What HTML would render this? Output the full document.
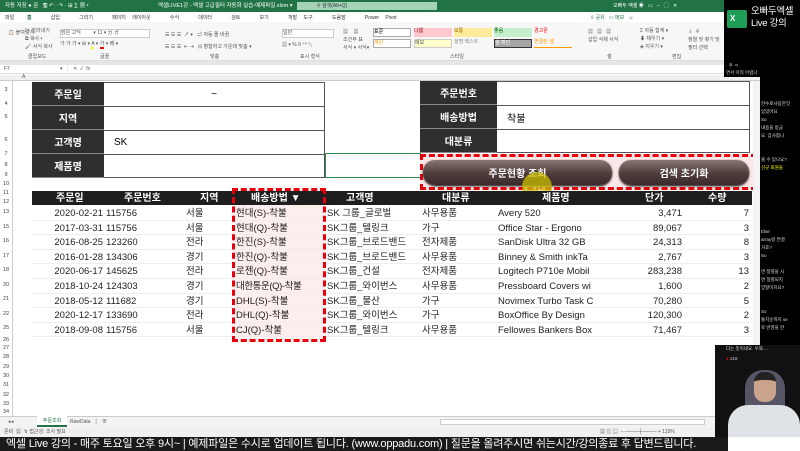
<!DOCTYPE html>
<html><head><meta charset="utf-8"><style>
*{margin:0;padding:0;box-sizing:border-box}
body{width:800px;height:451px;overflow:hidden;background:#fff;position:relative;font-family:"Liberation Sans","Noto Sans CJK KR",sans-serif;}
.a{position:absolute;white-space:nowrap}
.t{font-size:5px;color:#555;line-height:7px}
.lbl{position:absolute;background:#2f2f2f;color:#fff;font-size:10px;font-weight:bold;display:flex;align-items:center;justify-content:center;border-bottom:1px solid #888}
.val{position:absolute;border:1px solid #555;border-left:none;font-size:10px;display:flex;align-items:center;padding-left:10px}
.row{position:absolute;left:32px;width:720px;height:14.6px;font-size:9.5px;line-height:13px;color:#222;border-bottom:1px solid #eee}
.row span{position:absolute;top:1px;line-height:13px}
.rn{position:absolute;left:0;width:12px;font-size:5.5px;color:#444;text-align:center;line-height:7px}
.btn{position:absolute;height:25px;border-radius:12px;background:linear-gradient(#8a7674,#4e3c3b 55%,#3a2c2b);color:#fff;font-size:10px;font-weight:bold;display:flex;align-items:center;justify-content:center;box-shadow:0 1px 2px #000}
</style></head><body>
<div class="a" style="left:0;top:0;width:724px;height:12px;background:#217346"></div>
<div class="a" style="left:5px;top:2px;font-size:5.5px;line-height:8px;color:#fff">자동 저장 ● 끔 &nbsp; 🖫 ↶ · ↷ · ⊞ ∑ ▦ ▾</div>
<div class="a" style="left:158px;top:2px;font-size:5.5px;line-height:8px;color:#fff">엑셀LIVE1강 - 엑셀 고급필터 자동화 실습-예제파일.xlsm ▾</div>
<div class="a" style="left:297px;top:2px;width:140px;height:8px;background:#a4d3b8;font-size:5px;line-height:8px;color:#333;padding-left:20px">⚲ 검색(Alt+Q)</div>
<div class="a" style="left:613px;top:2px;font-size:5px;line-height:8px;color:#fff">오빠두 엑셀 ◉ &nbsp; ▭ &nbsp; – &nbsp; ▢ &nbsp; ✕</div>
<div class="a" style="left:5px;top:15px;font-size:5px;line-height:7px;color:#333;word-spacing:5px">파일 &nbsp;<b style="color:#217346">홈</b> &nbsp; 삽입 &nbsp; 그리기 &nbsp; 페이지 레이아웃 &nbsp; 수식 &nbsp; 데이터 &nbsp; 검토 &nbsp; 보기 &nbsp; 개발 도구 &nbsp; 도움말 &nbsp; Power Pivot</div>
<div class="a" style="left:590px;top:15px;font-size:5px;line-height:7px;color:#217346">⇪ 공유 &nbsp; ▭ 메모 &nbsp; ☺</div>
<div class="a" style="left:0;top:22px;width:724px;height:39px;background:#f7f7f7;border-bottom:1px solid #ddd"></div>
<div class="a t" style="left:8px;top:30px">📋 붙여넣기</div>
<div class="a t" style="left:25px;top:27px;line-height:8px">✂ 잘라내기<br>⧉ 복사 ▾<br>🖌 서식 복사</div>
<div class="a t" style="left:60px;top:29px;width:90px;border:1px solid #ccc;background:#fff">맑은 고딕 &nbsp;&nbsp;&nbsp;&nbsp;&nbsp;&nbsp;&nbsp; ▾ 11 ▾ ガ ガ</div>
<div class="a t" style="left:60px;top:41px">가 가 가 ▾ ⊞ ▾ <span style="border-bottom:2px solid #ff0">A</span> ▾ <span style="border-bottom:2px solid red">가</span> ▾ 배 ▾</div>
<div class="a t" style="left:165px;top:29px;line-height:12px">☰ ☰ ☰ &nbsp;↗ ▾ &nbsp; ⇌ 자동 줄 바꿈<br>☰ ☰ ☰ &nbsp;⇤ ⇥ &nbsp; ⊟ 병합하고 가운데 맞춤 ▾</div>
<div class="a t" style="left:282px;top:29px;width:52px;border:1px solid #ccc;background:#fff">일반</div>
<div class="a t" style="left:282px;top:42px">▦ ▾ % 9 ⁺⁰ ⁰₀</div>
<div class="a t" style="left:343px;top:28px;line-height:8px">▦ &nbsp;&nbsp; ▦<br>조건부 표<br>서식 ▾ 서식▾</div>
<div class="a t" style="left:373px;top:28px;width:38px;height:9px;background:#fff;border:1px solid #aaa;color:#000">표준</div>
<div class="a t" style="left:373px;top:39px;width:38px;height:9px;background:#fff;border:1px solid #aaa;color:#f90">계산</div>
<div class="a t" style="left:414px;top:28px;width:38px;height:9px;background:#ffc7ce;color:#9c0006">나쁨</div>
<div class="a t" style="left:414px;top:39px;width:38px;height:9px;background:#ffffcc;border:1px solid #ccc">메모</div>
<div class="a t" style="left:454px;top:28px;width:38px;height:9px;background:#ffeb9c;color:#9c6500">보통</div>
<div class="a t" style="left:454px;top:39px;width:38px;height:9px;color:#888">설명 텍스트</div>
<div class="a t" style="left:494px;top:28px;width:38px;height:9px;background:#c6efce;color:#006100">좋음</div>
<div class="a t" style="left:494px;top:39px;width:38px;height:9px;background:#a5a5a5;color:#fff;border:1px solid #333">셀 확인</div>
<div class="a t" style="left:534px;top:28px;width:38px;height:9px;color:#f00">경고문</div>
<div class="a t" style="left:534px;top:39px;width:38px;height:9px;color:#f90;border-bottom:1px solid #f90">연결된 셀</div>
<div class="a t" style="left:588px;top:28px;line-height:8px">▦ &nbsp; ▦ &nbsp; ▦<br>삽입 삭제 서식</div>
<div class="a t" style="left:640px;top:27px;line-height:8px">Σ 자동 합계 ▾<br>⬇ 채우기 ▾<br>◈ 지우기 ▾</div>
<div class="a t" style="left:688px;top:28px;line-height:8px">⏚ &nbsp;⚲<br>정렬 및 찾기 및<br>필터 선택</div>
<div class="a t" style="left:28px;top:54px">클립보드</div><div class="a t" style="left:100px;top:54px">글꼴</div><div class="a t" style="left:210px;top:54px">맞춤</div><div class="a t" style="left:300px;top:54px">표시 형식</div><div class="a t" style="left:450px;top:54px">스타일</div><div class="a t" style="left:607px;top:54px">셀</div><div class="a t" style="left:672px;top:54px">편집</div>
<div class="a" style="left:0;top:61px;width:724px;height:4px;background:#e6e6e6"></div>
<div class="a" style="left:0;top:65px;width:760px;height:9px;background:#fff;border-bottom:1px solid #ddd"></div>
<div class="a t" style="left:4px;top:66px">F7</div><div class="a t" style="left:60px;top:66px">▾ &nbsp;⋮ &nbsp;✕ &nbsp;✓ &nbsp;fx</div>
<div class="a" style="left:0;top:75px;width:760px;height:6px;background:#f0f0f0;border-bottom:1px solid #ccc"></div>
<div class="a t" style="left:22px;top:74px">A</div>
<div class="a" style="left:724px;top:0;width:76px;height:77px;background:#000"></div>
<div class="a" style="left:760px;top:77px;width:40px;height:300px;background:#000"></div>
<div class="a" style="left:715px;top:345px;width:85px;height:92px;background:#111"></div>
<div class="a" style="left:727px;top:10px;width:20px;height:18px;background:#1f9e58;border-radius:2px;color:#fff;font-size:8px;line-height:10px;font-weight:bold;padding:4px 0 0 3px">X</div>
<div class="a" style="left:751px;top:6px;font-size:9.5px;color:#fff;line-height:12px;letter-spacing:-0.3px">오빠두엑셀<br>Live 강의</div>
<div class="a" style="left:726px;top:62px;font-size:4.5px;color:#ccc;line-height:7px">· 추 ㅋ<br>면서 아직 어렵나</div>
<div class="a" style="left:761px;top:100px;font-size:4.5px;color:#ddd;line-height:8px">한수로사용한것<br>있었어요<br>So<br>내용을 방금<br>요. 갑사합니<br><br><br>볼 수 있나요?<br><span style="color:#ff0">신규 회원을</span><br><br><br><br><br><br><br><br>Else<br>array랑 연결<br>거죠?<br>So<br><br>면 정렬을 시<br>면 정렬되지<br>양향이지요?<br><br><br>So<br>통치순까지 se<br>로 반영을 한<br></div>
<div class="a" style="left:726px;top:346px;font-size:4.5px;color:#ddd">다는 뜻이네요. 우와....</div>
<div class="a" style="left:726px;top:356px;font-size:4.5px;color:#ccc"><span style="color:red">●</span> 218</div>
<div class="a" style="left:745px;top:370px;width:40px;height:67px;background:#556;border-radius:18px 18px 0 0"></div>
<div class="a" style="left:754px;top:372px;width:22px;height:30px;background:#c9a38a;border-radius:10px;border-top:8px solid #222"></div>
<div class="a" style="left:728px;top:405px;width:72px;height:32px;background:#dfe3e8;border-radius:20px 20px 0 0"></div>
<div class="rn" style="top:87px">3</div><div class="rn" style="top:101px">4</div><div class="rn" style="top:114px">5</div><div class="rn" style="top:137px">6</div><div class="rn" style="top:151px">7</div><div class="rn" style="top:162px">8</div><div class="rn" style="top:172px">9</div><div class="rn" style="top:181px">10</div><div class="rn" style="top:190px">11</div><div class="rn" style="top:199px">12</div>
<div class="rn" style="top:209px">13</div><div class="rn" style="top:224px">15</div><div class="rn" style="top:238px">16</div><div class="rn" style="top:253px">17</div><div class="rn" style="top:267px">18</div><div class="rn" style="top:282px">20</div><div class="rn" style="top:296px">21</div><div class="rn" style="top:311px">22</div><div class="rn" style="top:325px">25</div><div class="rn" style="top:337px">26</div>
<div class="rn" style="top:345px">27</div><div class="rn" style="top:354px">28</div><div class="rn" style="top:364px">29</div><div class="rn" style="top:373px">30</div><div class="rn" style="top:382px">31</div><div class="rn" style="top:392px">32</div><div class="rn" style="top:401px">33</div><div class="rn" style="top:409px">34</div>
<div class="a" style="left:12px;top:81px;width:1px;height:335px;background:#ccc"></div>
<div class="lbl" style="left:32px;top:82px;width:72px;height:24px">주문일</div>
<div class="lbl" style="left:32px;top:106px;width:72px;height:24px">지역</div>
<div class="lbl" style="left:32px;top:130px;width:72px;height:24px">고객명</div>
<div class="lbl" style="left:32px;top:154px;width:72px;height:24px">제품명</div>
<div class="val" style="left:104px;top:82px;width:221px;height:25px;justify-content:center;padding:0">~</div>
<div class="val" style="left:104px;top:106px;width:221px;height:25px;border-top:none"></div>
<div class="val" style="left:104px;top:130px;width:221px;height:25px;border-top:none">SK</div>
<div class="val" style="left:104px;top:154px;width:221px;height:24px;border-top:none"></div>
<div class="a" style="left:325px;top:153px;width:96px;height:25px;border:1px solid #2e8b57"></div>
<div class="lbl" style="left:420px;top:81px;width:77px;height:24px">주문번호</div>
<div class="lbl" style="left:420px;top:105px;width:77px;height:24px">배송방법</div>
<div class="lbl" style="left:420px;top:129px;width:77px;height:24px">대분류</div>
<div class="val" style="left:497px;top:81px;width:253px;height:25px"></div>
<div class="val" style="left:497px;top:105px;width:253px;height:25px;border-top:none">착불</div>
<div class="val" style="left:497px;top:129px;width:253px;height:24px;border-top:none"></div>
<div class="a" style="left:420px;top:154px;width:337px;height:36px;border:3px dashed #e8000b;background:#fbe7e7"></div>
<div class="btn" style="left:423px;top:160px;width:189px">주문현황 조회</div>
<div class="btn" style="left:619px;top:160px;width:130px">검색 초기화</div>
<div class="a" style="left:522px;top:172px;width:30px;height:30px;border-radius:50%;background:rgba(200,190,0,.75)"></div>
<div class="a" style="left:535px;top:184px;font-size:10px;color:#fff">☝</div>
<div class="a" style="left:32px;top:191px;width:720px;height:14px;background:#1e1e1e"></div>
<div class="a" style="left:32px;top:192px;width:720px;height:14px;color:#fff;font-size:10px;line-height:13px;font-weight:bold">
<span class="a" style="left:24px;top:0">주문일</span><span class="a" style="left:92px;top:0">주문번호</span><span class="a" style="left:168px;top:0">지역</span><span class="a" style="left:219px;top:0">배송방법 ▼</span><span class="a" style="left:314px;top:0">고객명</span><span class="a" style="left:410px;top:0">대분류</span><span class="a" style="left:510px;top:0">제품명</span><span class="a" style="left:613px;top:0">단가</span><span class="a" style="left:676px;top:0">수량</span></div>
<div class="a" style="left:232px;top:205px;width:93px;height:135px;background:#fdeeee"></div>
<div class="row" style="top:206px"><span style="right:649px">2020-02-21</span><span style="left:74px">115756</span><span style="left:154px">서울</span><span style="left:204px">현대(S)-착불</span><span style="left:295px">SK 그룹_글로벌</span><span style="left:390px">사무용품</span><span style="left:466px">Avery 520</span><span style="right:70px">3,471</span><span style="right:3px">7</span></div>
<div class="row" style="top:220.6px"><span style="right:649px">2017-03-31</span><span style="left:74px">115756</span><span style="left:154px">서울</span><span style="left:204px">현대(Q)-착불</span><span style="left:295px">SK그룹_텔링크</span><span style="left:390px">가구</span><span style="left:466px">Office Star - Ergono</span><span style="right:70px">89,067</span><span style="right:3px">3</span></div>
<div class="row" style="top:235.2px"><span style="right:649px">2016-08-25</span><span style="left:74px">123260</span><span style="left:154px">전라</span><span style="left:204px">한진(S)-착불</span><span style="left:295px">SK그룹_브로드밴드</span><span style="left:390px">전자제품</span><span style="left:466px">SanDisk Ultra 32 GB</span><span style="right:70px">24,313</span><span style="right:3px">8</span></div>
<div class="row" style="top:249.8px"><span style="right:649px">2016-01-28</span><span style="left:74px">134306</span><span style="left:154px">경기</span><span style="left:204px">한진(Q)-착불</span><span style="left:295px">SK그룹_브로드밴드</span><span style="left:390px">사무용품</span><span style="left:466px">Binney &amp; Smith inkTa</span><span style="right:70px">2,767</span><span style="right:3px">3</span></div>
<div class="row" style="top:264.4px"><span style="right:649px">2020-06-17</span><span style="left:74px">145625</span><span style="left:154px">전라</span><span style="left:204px">로젠(Q)-착불</span><span style="left:295px">SK그룹_건설</span><span style="left:390px">전자제품</span><span style="left:466px">Logitech P710e Mobil</span><span style="right:70px">283,238</span><span style="right:3px">13</span></div>
<div class="row" style="top:279px"><span style="right:649px">2018-10-24</span><span style="left:74px">124303</span><span style="left:154px">경기</span><span style="left:204px;letter-spacing:-0.4px">대한통운(Q)-착불</span><span style="left:295px">SK그룹_와이번스</span><span style="left:390px">사무용품</span><span style="left:466px">Pressboard Covers wi</span><span style="right:70px">1,600</span><span style="right:3px">2</span></div>
<div class="row" style="top:293.6px"><span style="right:649px">2018-05-12</span><span style="left:74px">111682</span><span style="left:154px">경기</span><span style="left:204px">DHL(S)-착불</span><span style="left:295px">SK그룹_물산</span><span style="left:390px">가구</span><span style="left:466px">Novimex Turbo Task C</span><span style="right:70px">70,280</span><span style="right:3px">5</span></div>
<div class="row" style="top:308.2px"><span style="right:649px">2020-12-17</span><span style="left:74px">133690</span><span style="left:154px">전라</span><span style="left:204px">DHL(Q)-착불</span><span style="left:295px">SK그룹_와이번스</span><span style="left:390px">가구</span><span style="left:466px">BoxOffice By Design</span><span style="right:70px">120,300</span><span style="right:3px">2</span></div>
<div class="row" style="top:322.8px"><span style="right:649px">2018-09-08</span><span style="left:74px">115756</span><span style="left:154px">서울</span><span style="left:204px">CJ(Q)-착불</span><span style="left:295px">SK그룹_텔링크</span><span style="left:390px">사무용품</span><span style="left:466px">Fellowes Bankers Box</span><span style="right:70px">71,467</span><span style="right:3px">3</span></div>
<div class="a" style="left:232px;top:188px;width:94px;height:154px;border:3px dashed #e8000b"></div>
<div class="a" style="left:753px;top:81px;width:7px;height:264px;background:#f3f3f3"></div>
<div class="a" style="left:0;top:416px;width:715px;height:12px;background:#f3f3f3;border-top:1px solid #ccc"></div>
<div class="a t" style="left:8px;top:419px">◂ ▸</div>
<div class="a" style="left:37px;top:416px;width:30px;height:11px;background:#fff;border-bottom:2px solid #217346;font-size:5px;line-height:7px;color:#217346;text-align:center;padding-top:2px">주문조회</div>
<div class="a t" style="left:70px;top:419px">RawData &nbsp;&nbsp;│ &nbsp;&nbsp;⊕</div>
<div class="a" style="left:440px;top:419px;width:265px;height:6px;background:#fff;border:1px solid #ccc"></div>
<div class="a" style="left:0;top:428px;width:715px;height:9px;background:#f0f0f0"></div>
<div class="a t" style="left:4px;top:429px">준비 &nbsp;▦ &nbsp;↯ 접근성: 조사 필요</div>
<div class="a t" style="left:600px;top:429px">▦ ▥ ▤ &nbsp;– ────┼──── + 115%</div>
<div class="a" style="left:0;top:437px;width:728px;height:14px;background:#1a1a1a"></div>
<div class="a" style="left:6px;top:437px;font-size:11px;line-height:14px;color:#fff;letter-spacing:-0.2px">엑셀 Live 강의 - 매주 토요일 오후 9시~ | 예제파일은 수시로 업데이트 됩니다. (www.oppadu.com) | 질문을 올려주시면 쉬는시간/강의종료 후 답변드립니다.</div>
</body></html>
